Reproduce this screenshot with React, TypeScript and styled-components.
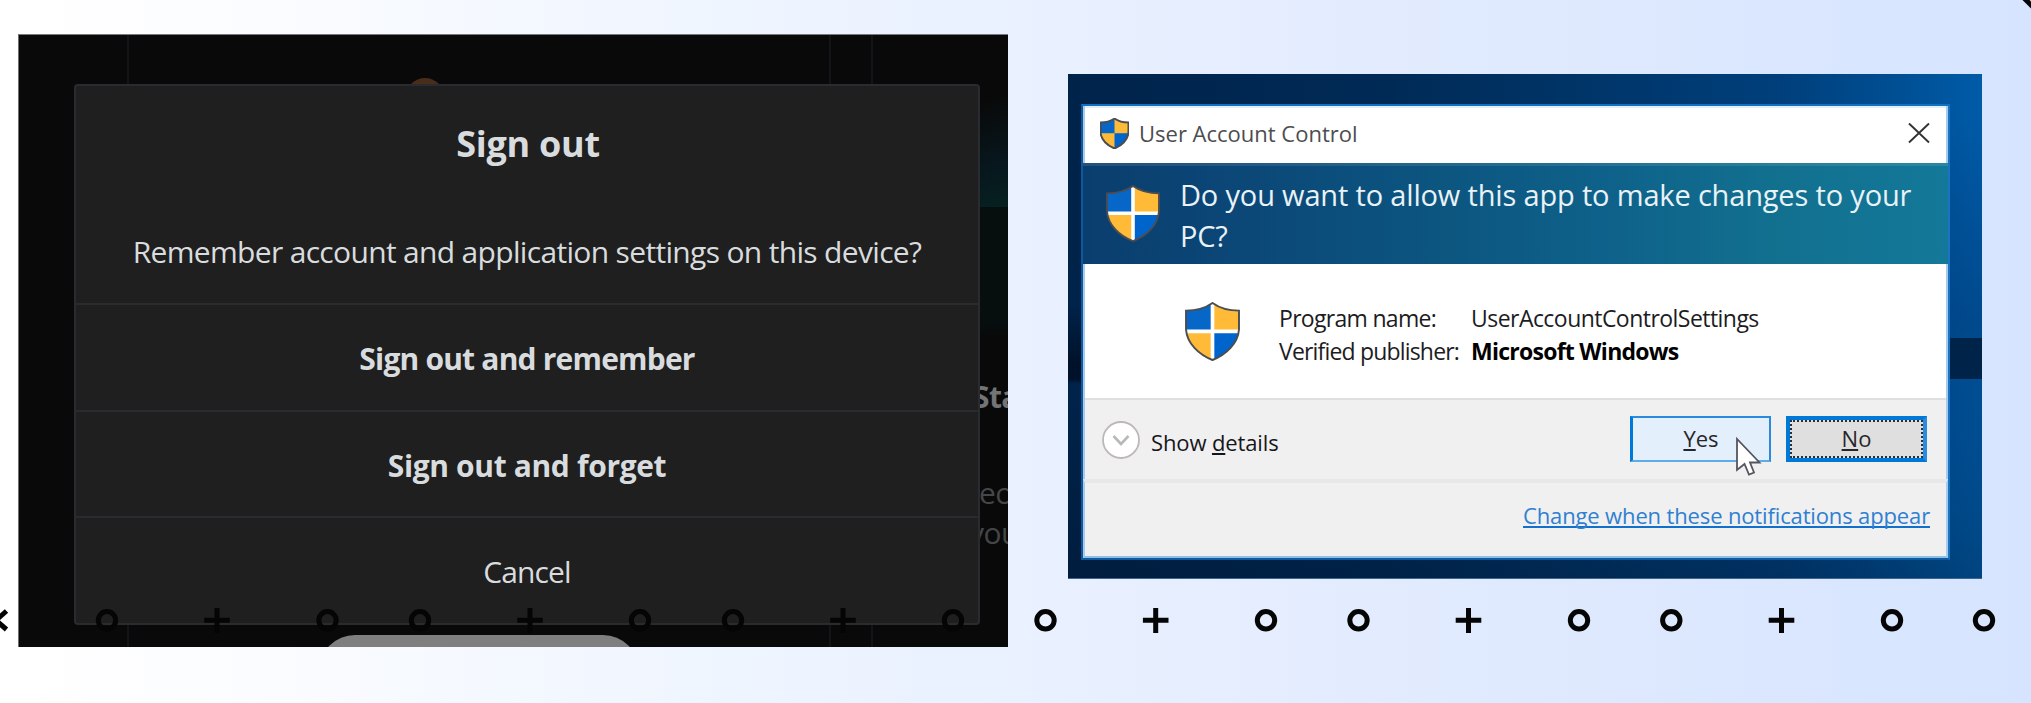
import React from 'react';
import styled, { createGlobalStyle } from 'styled-components';

const GlobalStyle = createGlobalStyle`
  *, *::before, *::after { box-sizing: border-box; }
  html, body { margin: 0; padding: 0; overflow: hidden; }
  body { font-family: 'Open Sans', 'Noto Sans', sans-serif; }
`;

const Stage = styled.main`
  position: relative;
  display: flex;
  align-items: flex-start;
  gap: 60px;
  width: 2031px;
  height: 703px;
  padding: 34px 0 0 18px;
  overflow: hidden;
  background: linear-gradient(90deg, #ffffff 0, #fbfcff 250px, #f4f8ff 510px, #edf4ff 800px, #e9f0ff 1050px, #e0eafe 1500px, #d9e6ff 1850px, #d6e4ff 2031px);
`;

/* Sign out prompt over a dimmed page */

const DarkPage = styled.section`
  position: relative;
  flex: none;
  width: 990px;
  height: 613px;
  padding: 49px 0 0 55px;
  overflow: hidden;
  background: #090909;
  border-left: 1px solid #6c6e70;
  border-top: 1px solid #77797c;
`;

const ColumnRule = styled.div<{ $x: number }>`
  position: absolute;
  top: 0;
  bottom: 0;
  left: ${(p) => p.$x}px;
  width: 2px;
  background: #141418;
`;

const Avatar = styled.div`
  position: absolute;
  top: 43px;
  left: 387px;
  width: 38px;
  height: 38px;
  border-radius: 50%;
  background: #492d1b;
`;

const Banner = styled.div`
  position: absolute;
  top: 52px;
  right: 0;
  width: 40px;
  height: 120px;
  background: linear-gradient(160deg, #090909 15%, #07171d 65%, #062121 100%);
`;

const BannerFooter = styled.div`
  position: absolute;
  top: 172px;
  right: 0;
  width: 40px;
  height: 130px;
  background: linear-gradient(#070e0e 88%, #090909);
`;

const DimText = styled.span<{ $x: number; $y: number; $strong?: boolean }>`
  position: absolute;
  left: ${(p) => p.$x}px;
  top: ${(p) => p.$y}px;
  font-size: 30px;
  line-height: 40px;
  letter-spacing: -0.6px;
  white-space: nowrap;
  font-weight: ${(p) => (p.$strong ? 700 : 400)};
  color: ${(p) => (p.$strong ? '#727475' : '#444648')};
`;

const Pill = styled.div`
  position: absolute;
  top: 600px;
  left: 300px;
  width: 320px;
  height: 72px;
  border-radius: 36px;
  background: #7f7f7f;
`;

const Prompt = styled.div`
  position: relative;
  display: flex;
  flex-direction: column;
  width: 906px;
  height: 541px;
  background: #1f1f1f;
  border: 2px solid #2a2a31;
  border-radius: 4px;
  color: #d9dcde;
  text-align: center;
`;

const PromptHead = styled.header`
  height: 217px;
  padding-top: 33px;
`;

const PromptTitle = styled.h1`
  margin: 0 0 63px;
  padding-left: 2px;
  font-size: 36px;
  line-height: 50px;
  font-weight: 700;
  letter-spacing: -0.25px;
`;

const PromptText = styled.p`
  margin: 0;
  font-size: 30px;
  line-height: 40px;
  letter-spacing: -0.67px;
  white-space: nowrap;
`;

const PromptAction = styled.button<{ $strong?: boolean; $height: number; $spacing: number }>`
  height: ${(p) => p.$height}px;
  padding: 3px 0 0;
  border: 0;
  border-top: 2px solid #2a2a31;
  background: transparent;
  color: inherit;
  font-family: inherit;
  font-size: 30px;
  line-height: 40px;
  font-weight: ${(p) => (p.$strong ? 700 : 400)};
  letter-spacing: ${(p) => p.$spacing}px;
`;

/* User Account Control window on a desktop */

const Desktop = styled.section`
  flex: none;
  width: 914px;
  height: 505px;
  margin-top: 40px;
  padding: 30px 0 0 13px;
  background:
    linear-gradient(#00234a, #00234a) 100% 264px / 32px 41px no-repeat,
    linear-gradient(rgba(0, 12, 30, 0), rgba(0, 12, 30, 0.75) 75%, rgba(0, 12, 30, 0.75) 94%, rgba(0, 12, 30, 0)) 0 230px / 13px 80px no-repeat,
    linear-gradient(rgba(0, 40, 90, 0), rgba(0, 40, 90, 0.35) 50%, rgba(0, 40, 90, 0)) 100% 40px / 32px 420px no-repeat,
    linear-gradient(rgba(0, 14, 34, 0) 60%, rgba(0, 14, 34, 0.3)),
    linear-gradient(90deg, #00234a 0, #002a56 35%, #003467 55%, #003f7b 78%, #004f94 91%, #005ba8 100%);
  border-bottom: 1px solid #3c6590;
`;

const Window = styled.div`
  display: flex;
  flex-direction: column;
  width: 869px;
  height: 456px;
  background: #ffffff;
  border: 2px solid #0f5a9f;
  border-top-color: #1170c0;
  border-right-color: #1a74c2;
`;

const Section = styled.div`
  display: flex;
  border: 0 solid #a5ccee;
  border-width: 0 2px;
`;

const TitleBar = styled(Section)`
  align-items: center;
  height: 57px;
  padding: 0 15px 3px 15px;
  box-shadow: inset 0 2px #e1effb;
`;

const WindowTitle = styled.span`
  flex: 1;
  padding-left: 10px;
  font-size: 22px;
  line-height: 30px;
  color: #4d4d50;
`;

const Question = styled.div`
  display: flex;
  align-items: flex-start;
  gap: 20px;
  height: 101px;
  padding: 11px 0 0 23px;
  color: #e9f2f6;
  background:
    linear-gradient(rgba(255, 255, 255, 0.1), rgba(255, 255, 255, 0.1)) 0 0 / 100% 3px no-repeat,
    linear-gradient(90deg, #0a3e6e 0, #0b4878 20%, #0c5680 42%, #0e618a 60%, #12708f 80%, #137899 100%);
`;

const QuestionText = styled.h2`
  margin: 0;
  font-size: 29px;
  line-height: 41px;
  font-weight: 400;
  letter-spacing: -0.17px;
`;

const QuestionIcon = styled.div`
  padding-top: 11px;
  line-height: 0;
`;

const Program = styled(Section)`
  align-items: flex-start;
  gap: 39px;
  height: 134px;
  padding: 38px 0 0 100px;
`;

const Facts = styled.dl`
  display: grid;
  grid-template-columns: 192px auto;
  grid-auto-rows: 32.500px;
  margin: 0;
  font-size: 23px;
  line-height: 32px;
  color: #1c1c22;
  white-space: nowrap;
`;

const Term = styled.dt<{ $spacing: number }>`
  letter-spacing: ${(p) => p.$spacing}px;
`;

const Value = styled.dd<{ $strong?: boolean }>`
  margin: 0;
  color: ${(p) => (p.$strong ? '#000000' : 'inherit')};
  font-weight: ${(p) => (p.$strong ? 700 : 400)};
  letter-spacing: ${(p) => (p.$strong ? -0.74 : -0.54)}px;
`;

const Controls = styled(Section)`
  align-items: center;
  height: 81px;
  padding: 0 19px 0 17px;
  background: #f0f0f0;
  box-shadow: inset 0 2px #dfdfdf;
  gap: 15px;
`;

const Details = styled.div`
  display: flex;
  align-items: center;
  gap: 11px;
  flex: 1;
  padding-top: 2px;
  font-size: 22px;
  line-height: 30px;
  letter-spacing: -0.12px;
  color: #16161a;
`;

const DetailsLabel = styled.span`
  padding-top: 4px;
`;

const Key = styled.span`
  text-decoration: underline;
  text-decoration-thickness: 2px;
  text-underline-offset: 2px;
  text-decoration-skip-ink: none;
`;

const PushButton = styled.button<{ $kind: 'hover' | 'default' }>`
  width: 141px;
  height: 46px;
  padding: 0 0 1px;
  font-family: inherit;
  font-size: 22px;
  line-height: 30px;
  color: #26262a;
  background: ${(p) => (p.$kind === 'hover' ? '#e3effb' : '#e0dfdf')};
  border: 2px solid #2a8add;
  border-left: 3px solid #0078d7;
  border-bottom-color: #5fabe8;
  ${(p) => p.$kind === 'default' && 'border: 4px solid #0078d7; border-right-color: #2b8cde; outline: 2px dotted #26303a; outline-offset: -6px;'}
`;

const Footer = styled(Section)`
  justify-content: flex-end;
  height: 79px;
  padding: 17px 16px 0 0;
  background: #f0f0f0;
  border-top: 4px solid #e8e8e8;
  border-bottom: 2px solid #8ebfe6;
`;

const SettingsLink = styled.a`
  height: 30px;
  font-size: 22px;
  line-height: 30px;
  letter-spacing: -0.14px;
  color: #2f7fd2;
  text-decoration: underline;
  text-decoration-color: #1070cc;
  text-decoration-thickness: 2px;
  text-underline-offset: 2px;
  text-decoration-skip-ink: none;
`;

const Pointer = styled.svg`
  position: absolute;
  left: 1735px;
  top: 437px;
`;

const Marks = styled.svg`
  position: absolute;
  left: 0;
  top: 0;
  pointer-events: none;
`;

const SHIELD = 'M27 1 C34 6 43 8.500 53 8.500 V27 C52 41 40 52 27 57 C14 52 2 41 1 27 V8.500 C11 8.500 20 6 27 1 Z';

function Shield({ id, width, height, cross }: { id: string; width: number; height: number; cross: boolean }) {
  return (
    <svg width={width} height={height} viewBox="0 0 54 58" preserveAspectRatio="none">
      <clipPath id={id}>
        <path d={SHIELD} />
      </clipPath>
      <g clipPath={`url(#${id})`}>
        <rect width="54" height="58" fill="#ffbb37" />
        <rect width="27" height="28.500" fill="#0767c8" />
        <rect x="27" y="28.500" width="27" height="30" fill="#0064cd" />
        {cross && <path d="M27 0V58M0 28.800H54" stroke="#ffffff" strokeWidth="3.600" />}
      </g>
      <path d={SHIELD} fill="none" stroke="#4c4d50" strokeWidth={cross ? 1.9 : 3.6} />
    </svg>
  );
}

const rings = [107, 327.5, 420, 640, 733, 953, 1045.5, 1266, 1358.5, 1579, 1671.3, 1892, 1984];
const pluses = [217, 530, 843, 1155.7, 1468.5, 1781.5];

export default function App() {
  return (
    <>
      <GlobalStyle />
      <Stage>
        <DarkPage>
          <ColumnRule $x={108} />
          <ColumnRule $x={810} />
          <ColumnRule $x={852} />
          <Avatar />
          <Banner />
          <BannerFooter />
          <DimText $x={954} $y={342} $strong>Sta</DimText>
          <DimText $x={960} $y={438}>eo</DimText>
          <DimText $x={950} $y={478}>you</DimText>
          <Pill />
          <Prompt>
            <PromptHead>
              <PromptTitle>Sign out</PromptTitle>
              <PromptText>Remember account and application settings on this device?</PromptText>
            </PromptHead>
            <PromptAction $strong $height={107} $spacing={-0.8}>Sign out and remember</PromptAction>
            <PromptAction $strong $height={106} $spacing={-0.36}>Sign out and forget</PromptAction>
            <PromptAction $height={107} $spacing={-0.9}>Cancel</PromptAction>
          </Prompt>
        </DarkPage>

        <Desktop>
          <Window>
            <TitleBar>
              <Shield id="shield-title" width={29} height={31} cross={false} />
              <WindowTitle>User Account Control</WindowTitle>
              <svg width="24" height="22" viewBox="0 0 24 22">
                <path d="M2 1.500L22 20.500M22 1.500L2 20.500" stroke="#333333" strokeWidth="1.900" />
              </svg>
            </TitleBar>
            <Question>
              <QuestionIcon>
                <Shield id="shield-question" width={54} height={57} cross />
              </QuestionIcon>
              <QuestionText>
                Do you want to allow this app to make changes to your
                <br />
                PC?
              </QuestionText>
            </Question>
            <Program>
              <Shield id="shield-program" width={55} height={59} cross />
              <Facts>
                <Term $spacing={-0.7}>Program name:</Term>
                <Value>UserAccountControlSettings</Value>
                <Term $spacing={-0.82}>Verified publisher:</Term>
                <Value $strong>Microsoft Windows</Value>
              </Facts>
            </Program>
            <Controls>
              <Details>
                <svg width="38" height="38" viewBox="0 0 38 38">
                  <circle cx="19" cy="19" r="18" fill="#ffffff" stroke="#bdb8b8" strokeWidth="1.800" />
                  <path d="M11.500 15L19 23L26.500 15" fill="none" stroke="#b9b9bb" strokeWidth="2.600" />
                </svg>
                <DetailsLabel>
                  Show <Key>d</Key>etails
                </DetailsLabel>
              </Details>
              <PushButton $kind="hover">
                <Key>Y</Key>es
              </PushButton>
              <PushButton $kind="default">
                <Key>N</Key>o
              </PushButton>
            </Controls>
            <Footer>
              <SettingsLink>Change when these notifications appear</SettingsLink>
            </Footer>
          </Window>
        </Desktop>

        <Pointer width="28" height="42" viewBox="0 0 28 42">
          <path d="M2 2V33L9.500 27L14 37.500L19 35.500L15 25.500H24.500Z" fill="#ffffff" stroke="#55555f" strokeWidth="1.800" />
        </Pointer>

        <Marks width="2031" height="703" viewBox="0 0 2031 703" fill="none" stroke="#050505" strokeWidth="5">
          {rings.map((x) => (
            <circle key={x} cx={x} cy="620.300" r="8.700" />
          ))}
          {pluses.map((x) => (
            <path key={x} d={`M${x - 12.8} 620.300H${x + 12.8}M${x} 608V633`} />
          ))}
          <path d="M6.500 611L-4 620.300L6.500 629.500" />
          <path d="M2023 -3L2035 9" />
        </Marks>
      </Stage>
    </>
  );
}
